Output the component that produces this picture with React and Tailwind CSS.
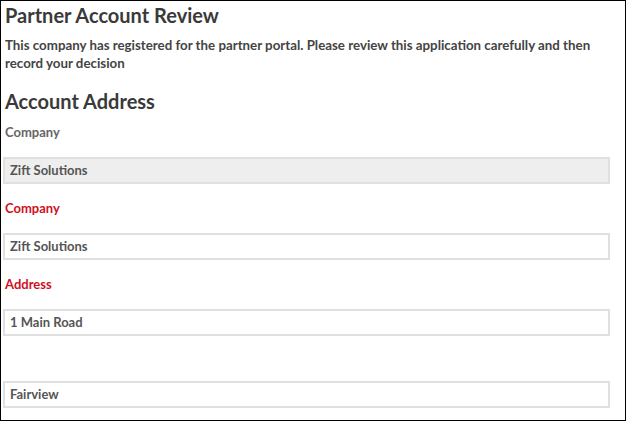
import React from "react";

const font = { fontFamily: "Lato, 'Open Sans', sans-serif" };

function Field({ label, value, required, disabled, className = "" }) {
  return (
    <div className={className}>
      {label !== undefined && (
        <div
          className={`h-[18px] pl-[2px] text-[13px] leading-[18px] font-bold ${
            required ? "text-[#d0101e]" : "text-[#666]"
          }`}
        >
          {label}
        </div>
      )}
      <div
        className={`mt-[16px] h-[27px] w-[607px] border-2 border-[#e0e0e0] px-[5px] text-[13px] leading-[23px] font-bold text-[#555] ${
          disabled ? "bg-[#eeeeee]" : "bg-white"
        }`}
      >
        {value}
      </div>
    </div>
  );
}

export default function App() {
  return (
    <div
      className="h-[421px] w-[626px] overflow-hidden border border-black bg-white pl-[2px] text-[#333]"
      style={font}
    >
      <h1 className="mt-[1px] pl-[2px] text-[20px] leading-[26px] font-bold text-[#3a3a3a]">
        Partner Account Review
      </h1>
      <p className="mt-[8px] pl-[2px] text-[13.3px] leading-[18px] font-bold text-[#444]">
        This company has registered for the partner portal. Please review this
        application carefully and then record your decision
      </p>
      <h2 className="mt-[16px] pl-[2px] text-[20px] leading-[26px] font-bold text-[#3a3a3a]">
        Account Address
      </h2>
      <Field className="mt-[9px]" label="Company" value="Zift Solutions" disabled />
      <Field className="mt-[15px]" label="Company" value="Zift Solutions" required />
      <Field className="mt-[15px]" label="Address" value="1 Main Road" required />
      <Field className="mt-[45px]" value="Fairview" />
    </div>
  );
}
